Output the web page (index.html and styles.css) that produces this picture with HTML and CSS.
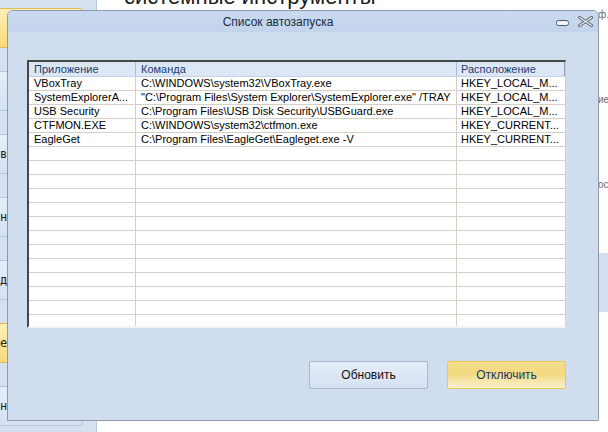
FILE: index.html
```html
<!DOCTYPE html>
<html lang="ru">

<head>
  <meta charset="UTF-8" />
  <title>Список автозапуска</title>
  <link rel="stylesheet" href="styles.css">
</head>

<body>
  <div class="sidebar">
    <div class="nav-btn active"></div>
    <div class="nav-btn"></div>
    <div class="nav-btn">в</div>
    <div class="nav-btn">н</div>
    <div class="nav-btn">д.</div>
    <div class="nav-btn active">е</div>
    <div class="nav-btn">н</div>
  </div>

  <div class="main">
    <div class="main-body">
      <h1 class="page-title">системные инструменты</h1>
    </div>
    <div class="notes">
      <p class="note first">ф.</p>
      <p class="note">ие</p>
      <p class="note">ос</p>
      <div class="note-panel"></div>
    </div>
  </div>

  <!-- dialog window on top of the page -->
  <div class="dialog">
    <div class="titlebar">
      <div class="title">Список автозапуска</div>
      <div class="controls">
        <svg class="ctl-min" width="13" height="6" viewBox="0 0 13 6">
          <rect x="0.5" y="0.5" width="12" height="5" rx="2" fill="#f2f5f9" stroke="#4b5563" />
        </svg>
        <svg class="ctl-close" width="15" height="11" viewBox="0 0 15 11">
          <path d="M1.5 1.5 L13.5 9.5 M13.5 1.5 L1.5 9.5" stroke="#59616d" stroke-width="3" stroke-linecap="round" />
          <path d="M1.5 1.5 L13.5 9.5 M13.5 1.5 L1.5 9.5" stroke="#eef2f7" stroke-width="1.2" stroke-linecap="round" />
        </svg>
      </div>
    </div>

    <div class="dialog-body">
      <div class="list">
        <div class="row head">
          <div class="cell">Приложение</div>
          <div class="cell">Команда</div>
          <div class="cell">Расположение</div>
        </div>
        <div class="row">
          <div class="cell">VBoxTray</div>
          <div class="cell">C:\WINDOWS\system32\VBoxTray.exe</div>
          <div class="cell">HKEY_LOCAL_M...</div>
        </div>
        <div class="row">
          <div class="cell">SystemExplorerA...</div>
          <div class="cell">"C:\Program Files\System Explorer\SystemExplorer.exe" /TRAY</div>
          <div class="cell">HKEY_LOCAL_M...</div>
        </div>
        <div class="row">
          <div class="cell">USB Security</div>
          <div class="cell">C:\Program Files\USB Disk Security\USBGuard.exe</div>
          <div class="cell">HKEY_LOCAL_M...</div>
        </div>
        <div class="row">
          <div class="cell">CTFMON.EXE</div>
          <div class="cell">C:\WINDOWS\system32\ctfmon.exe</div>
          <div class="cell">HKEY_CURRENT...</div>
        </div>
        <div class="row">
          <div class="cell">EagleGet</div>
          <div class="cell">C:\Program Files\EagleGet\Eagleget.exe -V</div>
          <div class="cell">HKEY_CURRENT...</div>
        </div>
        <div class="row"><div class="cell"></div><div class="cell"></div><div class="cell"></div></div>
        <div class="row"><div class="cell"></div><div class="cell"></div><div class="cell"></div></div>
        <div class="row"><div class="cell"></div><div class="cell"></div><div class="cell"></div></div>
        <div class="row"><div class="cell"></div><div class="cell"></div><div class="cell"></div></div>
        <div class="row"><div class="cell"></div><div class="cell"></div><div class="cell"></div></div>
        <div class="row"><div class="cell"></div><div class="cell"></div><div class="cell"></div></div>
        <div class="row"><div class="cell"></div><div class="cell"></div><div class="cell"></div></div>
        <div class="row"><div class="cell"></div><div class="cell"></div><div class="cell"></div></div>
        <div class="row"><div class="cell"></div><div class="cell"></div><div class="cell"></div></div>
        <div class="row"><div class="cell"></div><div class="cell"></div><div class="cell"></div></div>
        <div class="row"><div class="cell"></div><div class="cell"></div><div class="cell"></div></div>
        <div class="row"><div class="cell"></div><div class="cell"></div><div class="cell"></div></div>
        <div class="row"><div class="cell"></div><div class="cell"></div><div class="cell"></div></div>
      </div>

      <div class="actions">
        <button class="btn">Обновить</button>
        <button class="btn primary">Отключить</button>
      </div>
    </div>
  </div>
</body>

</html>
```

FILE: styles.css
```css
body {
  margin: 0;
  width: 608px;
  height: 432px;
  overflow: hidden;
  display: flex;
  position: relative;
  background-color: #ffffff;
  font-family: 'Liberation Sans', Arial, sans-serif;
  font-size: 11px;
  color: #000000;
}

/* page behind the dialog */
.sidebar {
  width: 97px;
  flex-shrink: 0;
  display: flex;
  flex-direction: column;
  gap: 23px;
  padding-top: 8px;
  box-sizing: border-box;
  background-color: #d5e1f1;
  border-right: 1px solid #b9c9de;
}

.nav-btn {
  width: 84px;
  height: 40px;
  box-sizing: border-box;
  display: flex;
  align-items: center;
  padding-left: 0;
  margin-left: -1px;
  background: linear-gradient(#e5eefa, #d4e1f2);
  border: 1px solid #b4c5dd;
  border-radius: 0 3px 3px 0;
  font-family: 'DejaVu Sans Mono', monospace;
  font-size: 12px;
  color: #222222;
}

.nav-btn.active {
  background: linear-gradient(#fdf0b8, #f7da7a);
  border-color: #e0bb55;
}

.main {
  flex: 1;
  display: flex;
}

.main-body {
  flex: 1;
}

.page-title {
  margin: -14px 0 0 27px;
  font-size: 22px;
  line-height: 22px;
  font-weight: normal;
  color: #1c1c1c;
}

.notes {
  width: 11px;
  padding-top: 10px;
  display: flex;
  flex-direction: column;
}

.note {
  margin: 0 0 75px 1px;
  height: 10px;
  font-size: 10px;
  line-height: 10px;
  color: #6b6b6b;
  white-space: nowrap;
}

.note-panel {
  margin-top: -12px;
  height: 59px;
  background-color: #d3dff0;
  border-left: 1px solid #b9c9de;
}

/* dialog */
.dialog {
  position: absolute;
  left: 7px;
  top: 10px;
  width: 592px;
  height: 411px;
  box-sizing: border-box;
  display: flex;
  flex-direction: column;
  background-color: #d0ddee;
  border: 1px solid #8e9aab;
  border-radius: 6px 6px 0 0;
}

.titlebar {
  height: 21px;
  display: flex;
  align-items: center;
  background: linear-gradient(#c9daf0, #c2d4eb);
  border-radius: 5px 5px 0 0;
}

.title {
  flex: 1;
  text-align: center;
  font-size: 12px;
  color: #1b2a44;
}

.controls {
  width: 50px;
  display: flex;
  align-items: center;
  gap: 9px;
  padding-left: 8px;
  box-sizing: border-box;
}

.ctl-min {
  margin-top: 3px;
}

.dialog-body {
  flex: 1;
  padding: 28px 0 0 19px;
}

.list {
  width: 539px;
  height: 268px;
  box-sizing: border-box;
  overflow: hidden;
  background-color: #ffffff;
  border-top: 2px solid #474747;
  border-left: 2px solid #474747;
  border-right: 1px solid #d4d0c8;
  border-bottom: 2px solid #f4f4f4;
}

.row {
  display: grid;
  grid-template-columns: 107px 321px 1fr;
  height: 14px;
  box-sizing: border-box;
  border-bottom: 1px solid #d4d0c8;
}

.cell {
  padding-left: 5px;
  line-height: 13px;
  white-space: nowrap;
  overflow: hidden;
  border-right: 1px solid #d4d0c8;
}

.cell:last-child {
  border-right: none;
  padding-left: 4px;
}

.row.head {
  height: 15px;
  background-color: #dce7f5;
  border-bottom: 1px solid #c5d3e6;
  color: #1f3b70;
}

.row.head .cell {
  line-height: 15px;
  border-right-color: #aebdd3;
}

.row.head .cell:last-child {
  border-right: 1px solid #8f9cae;
}

.actions {
  display: flex;
  justify-content: flex-end;
  gap: 19px;
  width: 539px;
  margin-top: 33px;
}

.btn {
  width: 119px;
  height: 28px;
  background: linear-gradient(#e4edf9, #d5e2f3);
  border: 1px solid #a8b7ce;
  border-radius: 2px;
  font-family: 'Liberation Sans', Arial, sans-serif;
  font-size: 12px;
  color: #111111;
  cursor: pointer;
}

.btn.primary {
  background: linear-gradient(#f6df8c, #f2d97f 45%, #fbf1cf);
  border-color: #e8c856;
  color: #1e3668;
}
```
